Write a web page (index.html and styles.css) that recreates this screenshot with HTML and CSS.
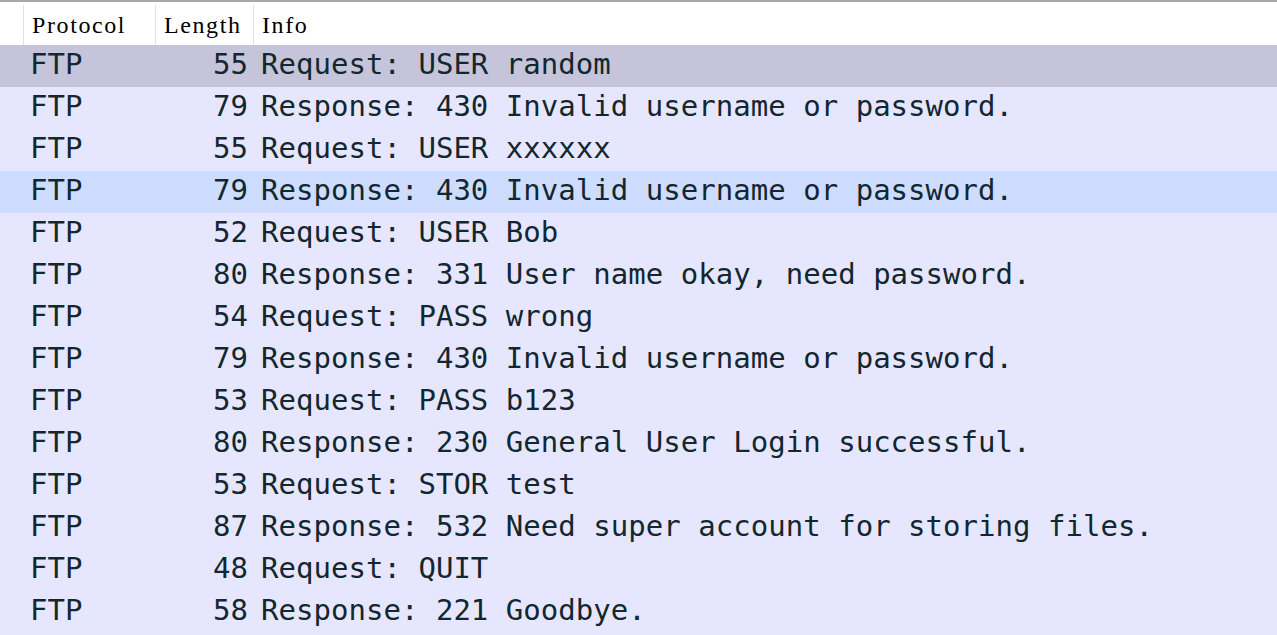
FILE: index.html
```html
<!DOCTYPE html>
<html>
<head>
<meta charset="utf-8">
<link rel="stylesheet" href="styles.css">
</head>
<body>
<div class="table">
  <div class="header">
    <div class="hcell hfirst"></div>
    <div class="hcell">Protocol</div>
    <div class="hcell">Length</div>
    <div class="hcell">Info</div>
  </div>
  <div class="rows">
    <div class="row selected"><span></span><span class="proto">FTP</span><span class="len">55</span><span class="info">Request: USER random</span></div>
    <div class="row"><span></span><span class="proto">FTP</span><span class="len">79</span><span class="info">Response: 430 Invalid username or password.</span></div>
    <div class="row"><span></span><span class="proto">FTP</span><span class="len">55</span><span class="info">Request: USER xxxxxx</span></div>
    <div class="row hover"><span></span><span class="proto">FTP</span><span class="len">79</span><span class="info">Response: 430 Invalid username or password.</span></div>
    <div class="row"><span></span><span class="proto">FTP</span><span class="len">52</span><span class="info">Request: USER Bob</span></div>
    <div class="row"><span></span><span class="proto">FTP</span><span class="len">80</span><span class="info">Response: 331 User name okay, need password.</span></div>
    <div class="row"><span></span><span class="proto">FTP</span><span class="len">54</span><span class="info">Request: PASS wrong</span></div>
    <div class="row"><span></span><span class="proto">FTP</span><span class="len">79</span><span class="info">Response: 430 Invalid username or password.</span></div>
    <div class="row"><span></span><span class="proto">FTP</span><span class="len">53</span><span class="info">Request: PASS b123</span></div>
    <div class="row"><span></span><span class="proto">FTP</span><span class="len">80</span><span class="info">Response: 230 General User Login successful.</span></div>
    <div class="row"><span></span><span class="proto">FTP</span><span class="len">53</span><span class="info">Request: STOR test</span></div>
    <div class="row"><span></span><span class="proto">FTP</span><span class="len">87</span><span class="info">Response: 532 Need super account for storing files.</span></div>
    <div class="row"><span></span><span class="proto">FTP</span><span class="len">48</span><span class="info">Request: QUIT</span></div>
    <div class="row"><span></span><span class="proto">FTP</span><span class="len">58</span><span class="info">Response: 221 Goodbye.</span></div>
  </div>
</div>
</body>
</html>
```
FILE: styles.css
```css
html, body {
  margin: 0;
  padding: 0;
  background: #e7e6ff;
}
.table {
  width: 1277px;
  height: 635px;
  overflow: hidden;
  background: #e7e6ff;
}
.header {
  display: grid;
  grid-template-columns: 23px 132px 98px 1fr;
  height: 40px;
  padding-top: 3px;
  background: #ffffff;
  border-top: 2px solid #a8a8a8;
  font-family: "Liberation Serif", serif;
  font-size: 24px;
  letter-spacing: 1.6px;
  color: #000000;
}
.hcell {
  border-left: 1px solid #e1e1e1;
  line-height: 41px;
  padding-left: 8px;
  white-space: nowrap;
}
.hfirst {
  border-left: none;
}
.rows {
  display: flex;
  flex-direction: column;
}
.row {
  display: grid;
  grid-template-columns: 23px 132px 98px 1fr;
  height: 42px;
  line-height: 39px;
  font-family: "DejaVu Sans Mono", monospace;
  font-size: 29px;
  letter-spacing: 0.03px;
  color: #12272e;
  background: #e7e6ff;
  white-space: pre;
}
.row.selected {
  background: #c6c4da;
}
.row.hover {
  background: #cddcff;
}
.proto {
  padding-left: 7px;
}
.len {
  text-align: right;
  padding-right: 5px;
}
.info {
  padding-left: 8px;
}
```
